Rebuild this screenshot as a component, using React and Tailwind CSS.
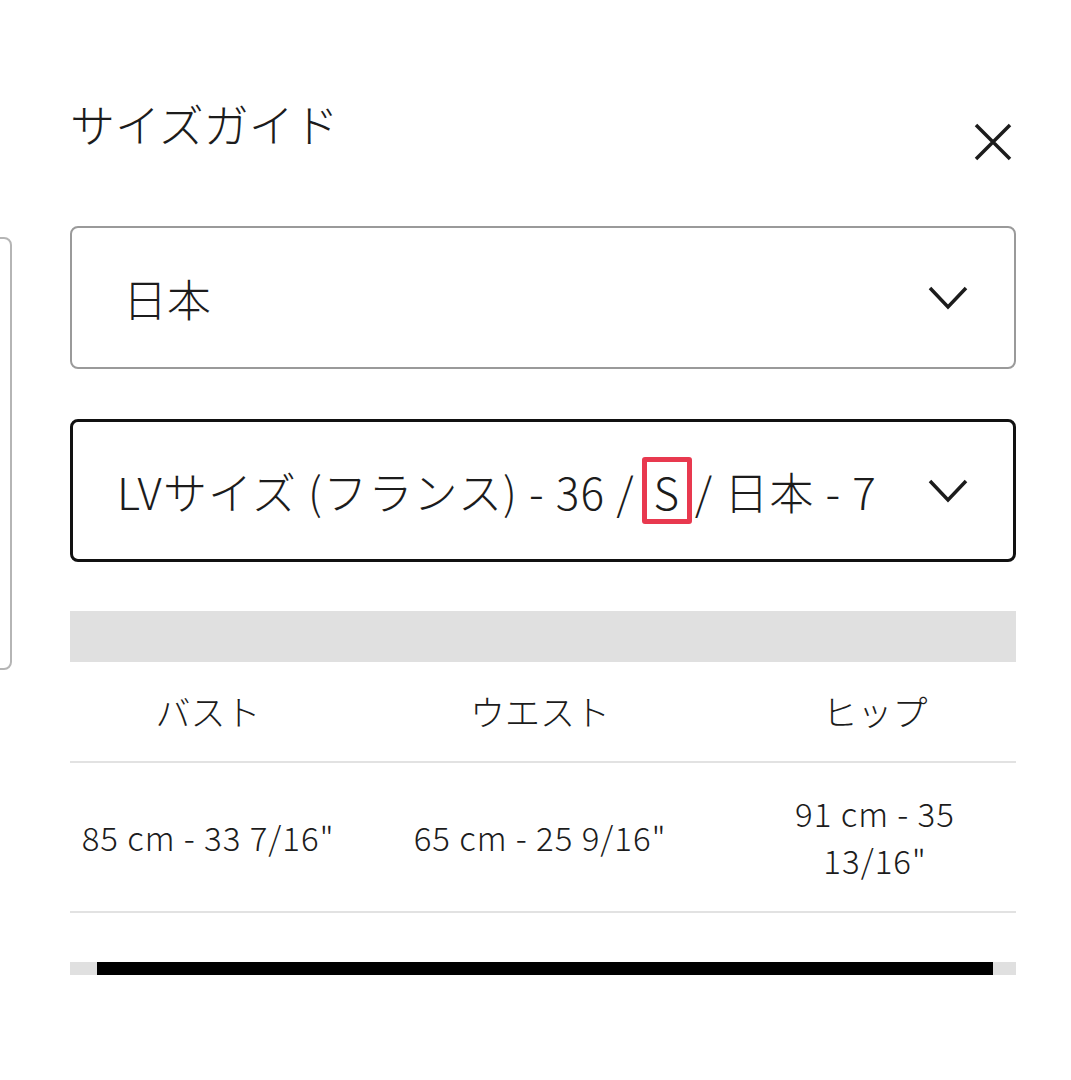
export default function App() {
  const font = { fontFamily: '"Noto Sans CJK JP", "Noto Sans", sans-serif' };
  return (
    <div className="relative w-[1071px] h-[1080px] bg-white text-[#1c1c1c] overflow-hidden font-light" style={font}>
      {/* partial left panel */}
      <div className="absolute left-[-20px] top-[237px] w-[32px] h-[433px] border-2 border-[#b5b5b5] rounded-[8px]" />
      <div className="pl-[70px] pr-[55px] pt-[96px]">
        <div className="flex items-start justify-between">
          <h1 className="text-[45px] leading-[56px] font-light">サイズガイド</h1>
          <svg className="mt-[26px] mr-[3px]" width="40" height="40" viewBox="0 0 40 40">
            <path d="M3 3 L37 37 M37 3 L3 37" stroke="#1c1c1c" strokeWidth="3.5" fill="none" />
          </svg>
        </div>
        <div className="mt-[64px] h-[143px] border-2 border-[#9a9a9a] rounded-[8px] flex items-center justify-between pl-[51px] pr-[46px]">
          <span className="text-[44px] leading-none">日本</span>
          <svg width="40" height="26" viewBox="0 0 40 26">
            <path d="M2 3 L20 22 L38 3" stroke="#1c1c1c" strokeWidth="3.5" fill="none" />
          </svg>
        </div>
        <div className="mt-[50px] h-[143px] border-[3px] border-[#111] rounded-[8px] flex items-center justify-between pl-[44px] pr-[45px]">
          <span className="text-[44px] leading-none flex items-center whitespace-nowrap tracking-[1.2px]">
            <span>LVサイズ (フランス) - 36 /</span>
            <span className="ml-[7px] mr-[3px] w-[50px] h-[67px] border-[5px] border-[#e8394f] rounded-[3px] flex items-center justify-center">S</span>
            <span>/ 日本 - 7</span>
          </span>
          <svg width="40" height="26" viewBox="0 0 40 26">
            <path d="M2 3 L20 22 L38 3" stroke="#1c1c1c" strokeWidth="3.5" fill="none" />
          </svg>
        </div>
        <div className="mt-[49px] h-[51px] bg-[#e0e0e0]" />
        <div className="grid grid-cols-[276px_388px_282px] text-center">
          <div className="h-[101px] flex items-center justify-center text-[35px] border-b-2 border-[#e2e2e2]">バスト</div>
          <div className="h-[101px] flex items-center justify-center text-[35px] border-b-2 border-[#e2e2e2]">ウエスト</div>
          <div className="h-[101px] flex items-center justify-center text-[35px] border-b-2 border-[#e2e2e2]">ヒップ</div>
          <div className="h-[150px] flex items-center justify-center text-[33px] leading-[47px] tracking-[1px] border-b-2 border-[#e2e2e2] whitespace-nowrap">85 cm - 33 7/16"</div>
          <div className="h-[150px] flex items-center justify-center text-[33px] leading-[47px] tracking-[1px] border-b-2 border-[#e2e2e2] whitespace-nowrap">65 cm - 25 9/16"</div>
          <div className="h-[150px] flex items-center justify-center text-[33px] leading-[47px] tracking-[1px] border-b-2 border-[#e2e2e2]">
            <span>91 cm - 35<br />13/16"</span>
          </div>
        </div>
        <div className="mt-[49px] h-[13px] bg-[#e0e0e0] pl-[27px] pr-[23px]">
          <div className="h-full bg-black" />
        </div>
      </div>
    </div>
  );
}
